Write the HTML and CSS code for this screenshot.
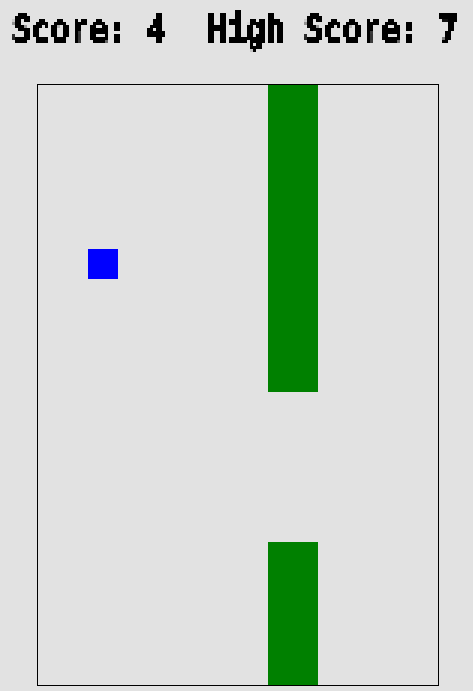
FILE: index.html
```html
<!DOCTYPE html>
<html lang="en">
<head>
    <meta charset="UTF-8">
    <title>Flappy Square</title>
    <link rel="stylesheet" href="styles.css">
</head>
<body>
    <svg class="filters" width="0" height="0">
        <filter id="pixelate" x="0" y="0" width="100%" height="100%" color-interpolation-filters="sRGB">
            <feFlood x="1" y="1" width="1" height="1" flood-color="#000"/>
            <feComposite width="3" height="3"/>
            <feTile result="grid"/>
            <feComposite in="SourceGraphic" in2="grid" operator="in"/>
            <feMorphology operator="dilate" radius="1"/>
            <feComponentTransfer>
                <feFuncA type="linear" slope="8" intercept="-3"/>
            </feComponentTransfer>
        </filter>
    </svg>
    <div class="scores">
        <span class="score">Score: 4</span>
        <span class="score">High Score: 7</span>
    </div>
    <div class="game">
        <div class="bird"></div>
        <div class="pipe pipe-top"></div>
        <div class="pipe pipe-bottom"></div>
    </div>
</body>
</html>
```
FILE: styles.css
```css
html, body {
    height: 100%;
}
body {
    margin: 0;
    background-color: #e2e2e2;
    overflow: hidden;
}
.filters {
    position: absolute;
}
.scores {
    display: flex;
    justify-content: space-between;
    height: 84px;
    padding: 7px 15px 0 12px;
    box-sizing: border-box;
}
.score {
    font-family: "DejaVu Sans Mono", monospace;
    font-weight: bold;
    font-size: 32px;
    line-height: 44px;
    height: 44px;
    color: #000;
    -webkit-text-stroke: 1.2px #000;
    transform: scaleY(1.15);
    filter: url(#pixelate);
}
.game {
    position: relative;
    width: 400px;
    height: 600px;
    margin-left: 37px;
    border: 1px solid #000;
}
.bird {
    position: absolute;
    left: 50px;
    top: 164px;
    width: 30px;
    height: 30px;
    background-color: #0000ff;
}
.pipe {
    position: absolute;
    left: 230px;
    width: 50px;
    background-color: #008000;
}
.pipe-top {
    top: 0;
    height: 307px;
}
.pipe-bottom {
    bottom: 0;
    height: 143px;
}
```
